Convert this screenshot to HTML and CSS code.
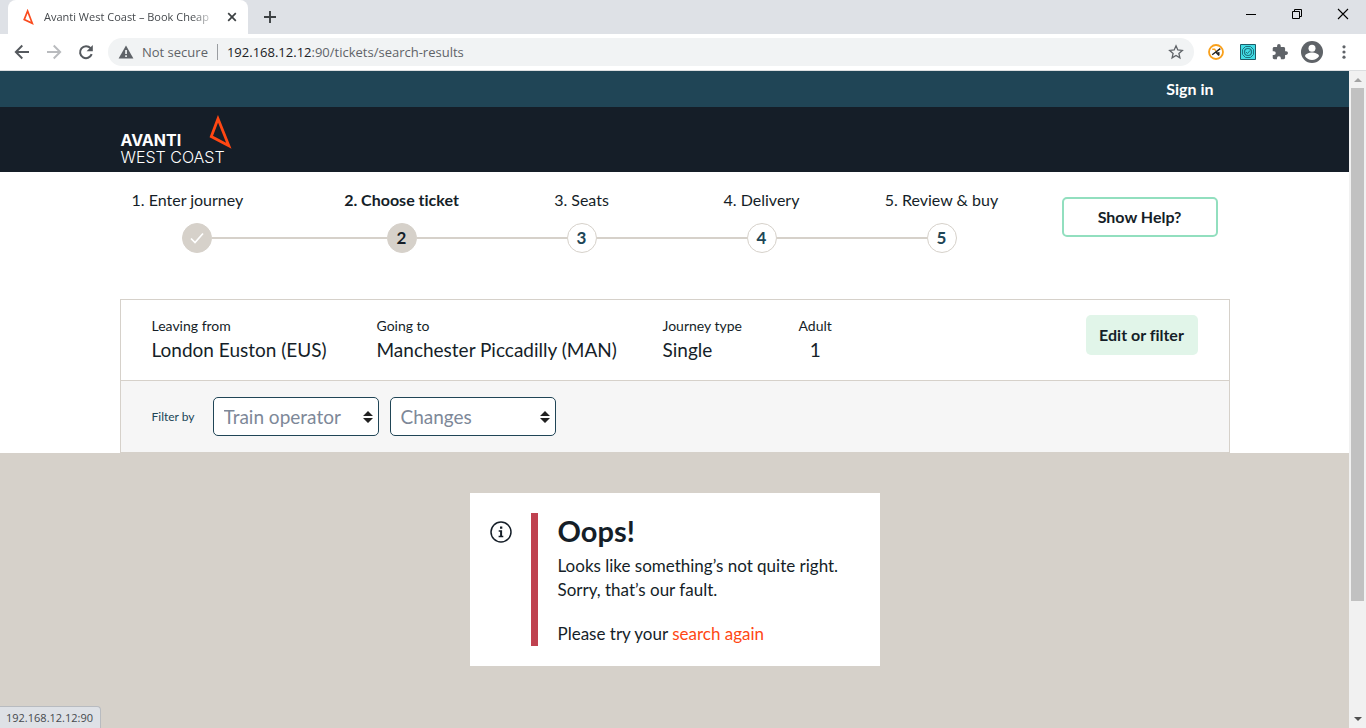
FILE: index.html
```html
<!DOCTYPE html>
<html lang="en">
<head>
<meta charset="utf-8">
<title>Avanti West Coast – Book Cheap Train Tickets</title>
<link rel="stylesheet" href="styles.css">
</head>
<body>
<div class="browser">
  <div class="tabstrip">
    <div class="tab">
      <svg class="tab-icon" width="16" height="16" viewBox="0 0 16 16"><path d="M7.6 2 4.2 10.6 12.3 14.3Z" fill="none" stroke="#fa4b1e" stroke-width="1.7"/></svg>
      <span class="tab-title">Avanti West Coast – Book Cheap</span>
      <button class="icon-button" aria-label="Close tab"><svg width="16" height="16" viewBox="0 0 16 16"><path d="M4.2 4.2l7.6 7.6M11.8 4.2l-7.6 7.6" stroke="#3c4043" stroke-width="1.7"/></svg></button>
    </div>
    <button class="icon-button new-tab" aria-label="New tab"><svg width="16" height="16" viewBox="0 0 16 16"><path d="M8 2v12M2 8h12" stroke="#3c4043" stroke-width="1.9"/></svg></button>
    <div class="window-buttons">
      <button class="icon-button" aria-label="Minimise"><svg width="12" height="12" viewBox="0 0 12 12"><path d="M1 6.5h10" stroke="#000"/></svg></button>
      <button class="icon-button" aria-label="Restore"><svg width="12" height="12" viewBox="0 0 12 12"><path d="M1.5 3.5h7v7h-7zM3.5 3.500v-2h7v7h-2" fill="none" stroke="#000"/></svg></button>
      <button class="icon-button" aria-label="Close"><svg width="12" height="12" viewBox="0 0 12 12"><path d="M1 1l10 10M11 1 1 11" stroke="#000" stroke-width="1.1"/></svg></button>
    </div>
  </div>
  <div class="toolbar">
    <div class="nav-buttons">
      <button class="icon-button" aria-label="Back"><svg width="16" height="16" viewBox="0 0 16 16"><path d="M15 8H2M8.300 1.500 1.800 8l6.500 6.500" fill="none" stroke="#55595e" stroke-width="1.900"/></svg></button>
      <button class="icon-button" aria-label="Forward"><svg width="16" height="16" viewBox="0 0 16 16"><path d="M1 8h13M7.700 1.500 14.200 8l-6.500 6.500" fill="none" stroke="#b9bbbe" stroke-width="1.900"/></svg></button>
      <button class="icon-button" aria-label="Reload"><svg width="16" height="16" viewBox="0 0 16 16"><path d="M13.700 10.200A6 6 0 1 1 12.600 4.200" fill="none" stroke="#55595e" stroke-width="2"/><path d="M14.800 1v6.200H8.600z" fill="#55595e"/></svg></button>
    </div>
    <div class="omnibox">
      <svg width="16" height="16" viewBox="0 0 16 16"><path d="M8 1.500 15.400 14.500H.6z" fill="#5f6368"/><path d="M7.200 6h1.700v4H7.200zM7.200 11.200h1.700v1.700H7.200z" fill="#f1f3f4"/></svg>
      <span class="security">Not secure</span>
      <span class="url"><span class="host">192.168.12.12</span>:90/tickets/search-results</span>
      <button class="icon-button" aria-label="Bookmark"><svg width="16" height="16" viewBox="0 0 16 16"><path d="M8 1.800l1.800 4.200 4.500.4-3.400 3 1 4.500L8 11.500l-3.900 2.400 1-4.500-3.400-3 4.500-.4z" fill="none" stroke="#5f6368" stroke-width="1.300"/></svg></button>
    </div>
    <div class="extensions">
      <button class="icon-button" aria-label="Orange extension"><svg width="16" height="16" viewBox="0 0 16 16"><circle cx="8" cy="8" r="7" fill="#fff" stroke="#f9a01b" stroke-width="1.800"/><path d="M4.200 5.200h2.500L8 7.500" fill="none" stroke="#f9a01b" stroke-width="1.400"/><path d="M12.300 4.600 4.200 10.800M8 8.200l3 3.300" fill="none" stroke="#222" stroke-width="1.400"/><path d="M8.500 8.500 11.500 8v3.500z" fill="#222"/></svg></button>
      <button class="icon-button" aria-label="Teal extension"><svg width="16" height="16" viewBox="0 0 16 16"><path d="M.5.5h15v15H.5z" fill="#42dce5" stroke="#1d5c68"/><path d="M5.500 2.500h5l3 3v5l-3 3h-5l-3-3v-5z" fill="none" stroke="#1d7480"/><circle cx="8" cy="8" r="3.500" fill="none" stroke="#1d7480" stroke-width="1.200"/><path d="M6 8l1.500 1.500L10 6.500" fill="none" stroke="#1d7480"/></svg></button>
      <button class="icon-button" aria-label="Extensions"><svg width="16" height="16" viewBox="1 1 22 22"><path d="M20.500 11H19V7c0-1.100-.9-2-2-2h-4V3.500a2.500 2.500 0 0 0-5 0V5H4c-1.100 0-2 .9-2 2v3.800h1.500a2.700 2.700 0 0 1 0 5.400H2V20c0 1.100.9 2 2 2h3.800v-1.500a2.700 2.700 0 0 1 5.400 0V22H17c1.100 0 2-.9 2-2v-4h1.500a2.500 2.500 0 0 0 0-5z" fill="#5f6368"/></svg></button>
      <button class="icon-button" aria-label="Profile"><svg width="22" height="22" viewBox="0 0 22 22"><circle cx="11" cy="11" r="11" fill="#5f6368"/><circle cx="11" cy="7.300" r="3.500" fill="#fff"/><path d="M4 15.300c0-2.500 4.600-3.700 7-3.700s7 1.200 7 3.700a8.500 8.500 0 0 1-14 0z" fill="#fff"/></svg></button>
      <button class="icon-button" aria-label="Menu"><svg width="16" height="16" viewBox="0 0 16 16" fill="#5f6368"><circle cx="8" cy="2.800" r="1.600"/><circle cx="8" cy="8" r="1.600"/><circle cx="8" cy="13.200" r="1.600"/></svg></button>
    </div>
  </div>

  <div class="viewport">
    <div class="page">
      <div class="topbar"><div class="container"><a class="sign-in" href="#">Sign in</a></div></div>
      <header class="masthead">
        <div class="container">
          <a class="logo" href="#">
            <span class="logo-text"><span class="logo-name">AVANTI</span><span class="logo-route">WEST COAST</span></span>
            <svg class="logo-mark" width="24" height="34" viewBox="0 0 24 34"><path d="M10 3.800 3.300 21.500 20.800 30.800Z" fill="none" stroke="#ff4713" stroke-width="2.800"/></svg>
          </a>
        </div>
      </header>
      <main>
        <div class="container progress">
          <ol class="steps">
            <li class="step done"><span class="step-label">1. Enter journey</span><span class="step-track"><span class="dot"><svg width="16" height="16" viewBox="0 0 16 16"><path d="M2 8.500l4 4 8-9" fill="none" stroke="#fff" stroke-width="1.700"/></svg></span></span></li>
            <li class="step current"><span class="step-label">2. Choose ticket</span><span class="step-track"><span class="dot">2</span></span></li>
            <li class="step"><span class="step-label">3. Seats</span><span class="step-track"><span class="dot">3</span></span></li>
            <li class="step"><span class="step-label">4. Delivery</span><span class="step-track"><span class="dot">4</span></span></li>
            <li class="step"><span class="step-label">5. Review &amp; buy</span><span class="step-track"><span class="dot">5</span></span></li>
          </ol>
          <button class="help">Show Help?</button>
        </div>
        <div class="container">
          <section class="journey">
            <div class="summary">
              <dl class="facts">
                <div class="fact from"><dt>Leaving from</dt><dd>London Euston (EUS)</dd></div>
                <div class="fact to"><dt>Going to</dt><dd>Manchester Piccadilly (MAN)</dd></div>
                <div class="fact type"><dt>Journey type</dt><dd>Single</dd></div>
                <div class="fact adult"><dt>Adult</dt><dd>1</dd></div>
              </dl>
              <button class="edit">Edit or filter</button>
            </div>
            <div class="filters">
              <label class="filter-label" for="operator">Filter by</label>
              <select class="filter-select" id="operator"><option>Train operator</option></select>
              <select class="filter-select" aria-label="Changes"><option>Changes</option></select>
            </div>
          </section>
        </div>
        <div class="results">
          <section class="notice">
            <svg class="notice-icon" width="22" height="22" viewBox="0 0 22 22"><circle cx="11" cy="11" r="10" fill="none" stroke="#151e28" stroke-width="1.500"/><path d="M10 5.500h2.300v2.200H10zM8.700 9.300h3.400v5.500h1.200v1.400H8.600v-1.400h1.500v-4.100H8.700z" fill="#151e28"/></svg>
            <div class="notice-body">
              <h1>Oops!</h1>
              <p>Looks like something’s not quite right.<br>Sorry, that’s our fault.</p>
              <p>Please try your <a href="#">search again</a></p>
            </div>
          </section>
        </div>
      </main>
    </div>
    <div class="scrollbar">
      <svg width="17" height="17" viewBox="0 0 17 17"><path d="M5 11h8L9 7z" fill="#a3a3a3"/></svg>
      <div class="scroll-track"><div class="scroll-thumb"></div></div>
      <svg width="17" height="17" viewBox="0 0 17 17"><path d="M5 6h8l-4 4z" fill="#505050"/></svg>
    </div>
    <div class="status">192.168.12.12:90</div>
  </div>
</div>
</body>
</html>
```
FILE: styles.css
```css
* { box-sizing: border-box; }
body { margin: 0; font-family: Lato, sans-serif; font-size: 16px; line-height: 24px; color: #151e28; font-variant-ligatures: none; }
button { font: inherit; color: inherit; font-variant-ligatures: none; cursor: pointer; }
svg { display: block; flex: none; }
.browser { display: flex; flex-direction: column; height: 100vh; overflow: hidden; }

/* Browser window */
.icon-button { display: flex; flex: none; align-items: center; justify-content: center; padding: 0; border: 0; background: none; }
.tabstrip { display: flex; align-items: center; height: 34px; flex: none; padding-left: 8px; background: #dee1e6; font: 11px/16px "Open Sans", sans-serif; color: #45494d; }
.tab { display: flex; align-items: center; width: 240px; height: 34px; padding: 0 8px 0 12px; border-radius: 8px 8px 0 0; background: #fff; }
.tab-title { flex: 1; min-width: 0; margin: 0 8px; white-space: nowrap; mask-image: linear-gradient(to left, transparent, #000 24px); }
.new-tab { margin-left: 14px; }
.window-buttons { display: flex; gap: 34px; margin-left: auto; padding: 0 17px 6px 0; }
.toolbar { display: flex; align-items: center; height: 37px; flex: none; padding: 0 14px 0 13px; border-bottom: 1px solid #dcdee0; background: #fff; }
.nav-buttons { display: flex; gap: 16px; padding-left: 1px; }
.omnibox { display: flex; align-items: center; flex: 1; height: 28px; margin-left: 14px; padding: 0 10px; border-radius: 14px; background: #f1f3f4; font: 13px/20px "Open Sans", sans-serif; }
.security { margin-left: 8px; padding-right: 9px; border-right: 1px solid #9a9da1; line-height: 16px; color: #5f6368; }
.url { flex: 1; margin-left: 9px; color: #5f6368; }
.host { color: #202124; }
.extensions { display: flex; align-items: center; gap: 16px; margin-left: 14px; }
.extensions .icon-button:nth-child(n+4) { margin-left: -3px; }

/* Page frame */
.viewport { display: flex; flex: 1; min-height: 0; position: relative; }
.page { display: flex; flex-direction: column; flex: 1; overflow: hidden; }
.container { width: 100%; max-width: 1110px; margin: 0 auto; }
.scrollbar { display: flex; flex-direction: column; width: 17px; background: #f1f1f1; }
.scroll-track { flex: 1; padding: 0 2px; }
.scroll-thumb { height: 82.4%; background: #c1c1c1; }
.status { position: absolute; left: 0; bottom: 0; padding: 3px 7px 2px 6px; border: 1px solid #b8bbc0; border-width: 1px 1px 0 0; border-radius: 0 4px 0 0; background: #dee1e6; font: 11px/16px "Open Sans", sans-serif; color: #45494d; }

/* Header */
.topbar { flex: none; padding: 6px 0; background: #204556; }
.topbar .container { display: flex; justify-content: flex-end; padding-right: 16px; }
.sign-in { color: #fff; font-weight: 700; text-decoration: none; }
.masthead { flex: none; padding: 8px 0 6px; background: #151e28; }
.logo { display: inline-flex; min-width: 112px; color: #fff; text-decoration: none; position: relative; font-family: Inter, sans-serif; font-size: 16px; line-height: 17px; vertical-align: top; }
.logo-text { display: flex; flex-direction: column; padding: 17px 0 0 1px; height: 51px; }
.logo-name { font-weight: 700; }
.logo-route { font-weight: 300; }
.logo-mark { position: absolute; right: 0; top: 0; }

/* Progress */
main { display: flex; flex-direction: column; flex: 1; }
.progress { display: flex; justify-content: space-between; align-items: flex-start; padding: 16px 12px 46px 0; }
.steps { display: flex; flex: 0 1 912px; margin: 0; padding: 0; list-style: none; }
.step { flex: 180 1 0; text-align: center; }
.step.done { flex-grow: 192; text-align: left; }
.step-label { display: block; font-size: 16px; }
.done .step-label { padding-left: 12px; }
.current .step-label { font-weight: 700; }
.step-track { display: flex; align-items: center; margin-top: 11px; }
.step-track::before, .step-track::after { content: ""; flex: 1; height: 2px; background: #d6d1ca; }
.done .step-track::before { flex: 0 0 62px; background: none; }
.step:last-child .step-track::after { background: none; }
.dot { display: flex; align-items: center; justify-content: center; width: 30px; height: 30px; border: 1px solid #d6d1ca; border-radius: 50%; font-size: 17px; font-weight: 700; color: #204556; }
.done .dot, .current .dot { background: #d6d1ca; color: #151e28; }
.help { width: 156px; height: 40px; margin-top: 9px; border: 2px solid #92dfbf; border-radius: 5px; background: #fff; font-weight: 700; }

/* Journey summary */
.journey { border: 1px solid #d6d1ca; }
.summary { display: flex; justify-content: space-between; align-items: flex-start; padding: 14px 31px 18px; }
.facts { display: flex; margin: 0; }
.from { width: 225px; }
.to { width: 286px; }
.type { width: 136px; }
.adult { text-align: center; }
dt { font-size: 14px; line-height: 24px; }
dd { margin: 0; font-size: 19px; line-height: 24px; }
.edit { width: 112px; height: 40px; margin-top: 1px; padding: 0; border: 0; border-radius: 5px; background: #e1f5e9; font-weight: 700; }
.filters { display: flex; align-items: center; padding: 16px 31px; border-top: 1px solid #d6d1ca; background: #f6f6f6; }
.filter-label { width: 61px; font-size: 12px; color: #204556; }
.filter-select { appearance: none; width: 166px; height: 39px; margin-right: 11px; padding: 0 10px; border: 1px solid #204556; border-radius: 5px; color: #7d8898; font: 19px/24px Lato, sans-serif; background: #fff url("data:image/svg+xml,%3Csvg xmlns='http://www.w3.org/2000/svg' width='10' height='12' viewBox='0 0 10 12'%3E%3Cpath fill='%23222' d='M0 5 5 0l5 5zM0 7l5 5 5-5z'/%3E%3C/svg%3E") no-repeat right 5px center; }

/* Error notice */
.results { flex: 1; padding: 40px 16px; background: #d6d1ca; }
.notice { display: flex; width: 100%; max-width: 410px; margin: 0 auto; padding: 20px; background: #fff; }
.notice-icon { margin-top: 8px; }
.notice-body { flex: 1; margin-left: 19px; padding-left: 20px; border-left: 7px solid #bf414f; }
.notice h1 { margin: 0 0 5px; font-size: 29px; line-height: 36px; font-weight: 700; }
.notice p { margin: 0 0 20px; font-size: 17px; }
.notice p:last-child { margin: 0; }
.notice a { color: #ff4713; text-decoration: none; }
```
